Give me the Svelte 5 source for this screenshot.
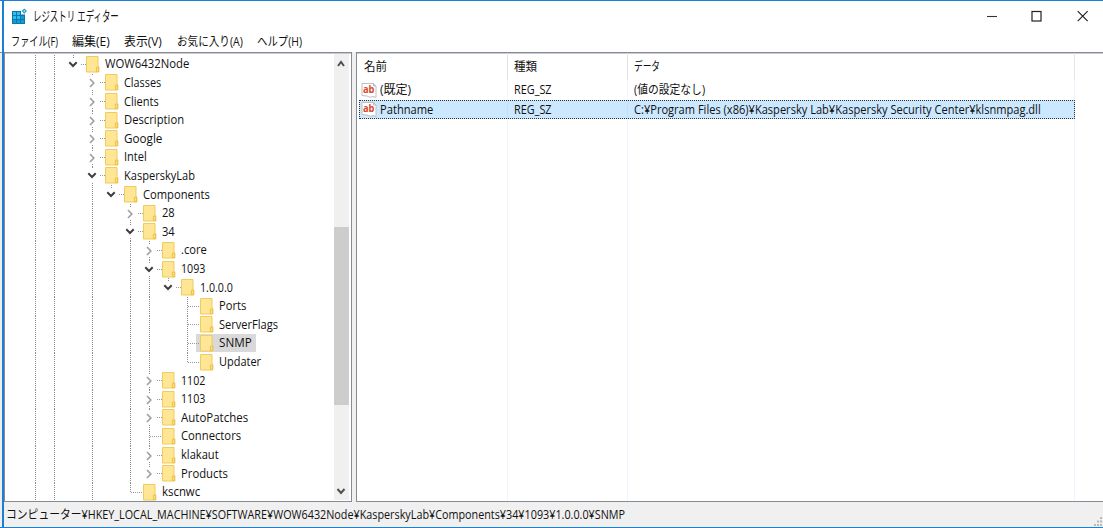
<script>
  const menu = [
    { t: 'ファイル(F)', w: 47, gap: 14 },
    { t: '編集(E)', w: 37.5, gap: 14.5 },
    { t: '表示(V)', w: 38, gap: 14.5 },
    { t: 'お気に入り(A)', w: 66, gap: 14.5 },
    { t: 'ヘルプ(H)', w: 45, gap: 0 }
  ];

  // [label, depth, state, text width, open guide depths, last sibling]
  const rows = [
    ['WOW6432Node', 0, 'open', 84, [], true],
    ['Classes', 1, 'closed', 37, [], false],
    ['Clients', 1, 'closed', 35, [], false],
    ['Description', 1, 'closed', 60, [], false],
    ['Google', 1, 'closed', 38, [], false],
    ['Intel', 1, 'closed', 23, [], false],
    ['KasperskyLab', 1, 'open', 71, [], false],
    ['Components', 2, 'open', 67, [1], true],
    ['28', 3, 'closed', 13, [1], false],
    ['34', 3, 'open', 13, [1], false],
    ['.core', 4, 'closed', 26, [1, 3], false],
    ['1093', 4, 'open', 24, [1, 3], false],
    ['1.0.0.0', 5, 'open', 33, [1, 3, 4], true],
    ['Ports', 6, 'leaf', 27, [1, 3, 4], false],
    ['ServerFlags', 6, 'leaf', 59, [1, 3, 4], false],
    ['SNMP', 6, 'leaf', 33, [1, 3, 4], false],
    ['Updater', 6, 'leaf', 42, [1, 3, 4], true],
    ['1102', 4, 'closed', 24, [1, 3], false],
    ['1103', 4, 'closed', 24, [1, 3], false],
    ['AutoPatches', 4, 'closed', 67, [1, 3], false],
    ['Connectors', 4, 'leaf', 60, [1, 3], false],
    ['klakaut', 4, 'closed', 38, [1, 3], false],
    ['Products', 4, 'closed', 47, [1, 3], true],
    ['kscnwc', 3, 'leaf', 38, [1], true]
  ].map(([label, depth, state, w, guides, last]) => ({ label, depth, state, w, guides, last }));

  const values = [
    { name: '(既定)', nw: 31, type: 'REG_SZ', data: '(値の設定なし)', dw: 71, sel: false },
    { name: 'Pathname', nw: 53, type: 'REG_SZ', data: 'C:¥Program Files (x86)¥Kaspersky Lab¥Kaspersky Security Center¥klsnmpag.dll', dw: 407, sel: true }
  ];

  // Condenses a label horizontally so that it fills the given width.
  function fit(node, width) {
    const inner = node.firstElementChild;
    inner.style.transform = `scaleX(${width / inner.offsetWidth})`;
  }
</script>

{#snippet text(t, w)}
  <span class="fit" style:width="{w}px" use:fit={w}><span>{t}</span></span>
{/snippet}

<div class="window">
  <header class="title">
    <svg class="app-icon" width="17" height="17" viewBox="0 0 17 17">
      <path d="M1 3h9v3.500h4V16H1z" fill="#0879ae" />
      <path d="M2 4h3v3H2zM6 4h3v3H6zM2 8h3v3H2zM6 8h3v3H6z" fill="#31bde9" />
      <path d="M10 8h3v3h-3zM2 12h3v3H2zM6 12h3v3H6zM10 12h3v3h-3z" fill="#159ccf" />
      <path d="M13.300.500l2.700 2.500-2.700 2.700-2.600-2.700z" fill="#1c9dd0" />
      <path d="M13.300 1.900l1.200 1.200-1.200 1.200-1.200-1.200z" fill="#a5e5fa" />
    </svg>
    {@render text('レジストリ エディター', 86)}
    <svg class="controls" width="104" height="14" viewBox="0 0 104 14">
      <path d="M1 7.500h10" stroke="#333" stroke-width="1.1" />
      <rect x="46" y="2.500" width="9" height="9.500" fill="none" stroke="#222" stroke-width="1.2" />
      <path d="M91.700 2.200l10 10M101.700 2.200l-10 10" stroke="#222" stroke-width="1.2" />
    </svg>
  </header>

  <nav>
    {#each menu as m}
      <span style:margin-right="{m.gap}px">{@render text(m.t, m.w)}</span>
    {/each}
  </nav>

  <main>
    <section class="pane tree">
      <div class="rows">
        {#each rows as r}
          <div class="row">
            <i class="cell line"></i>
            <i class="cell line"></i>
            {#each Array(r.depth) as _, d}
              <i class="cell" class:line={r.guides.includes(d)}></i>
            {/each}
            <i class="cell own line" class:half={r.last} class:leaf={r.state === 'leaf'}>
              {#if r.state === 'open'}
                <svg width="13" height="13" viewBox="0 0 13 13"><path d="M2.300 4.300l3.700 3.700 3.700-3.700" fill="none" stroke="#3f3f3f" stroke-width="2" /></svg>
              {:else if r.state === 'closed'}
                <svg width="13" height="13" viewBox="0 0 13 13"><path d="M4 3l3.800 4-3.800 4" fill="none" stroke="#a2a2a2" stroke-width="1.7" /></svg>
              {/if}
            </i>
            <i class="dash"></i>
            <div class="item" class:sel={r.label === 'SNMP'}>
              <svg class="folder" width="14" height="17" viewBox="0 0 14 17">
                <path d="M.5.500h11.500v10.300h.8v5.200H.5z" fill="#ffe694" stroke="#efcc5e" />
                <path d="M10.400 15.700v-4.500h2.200v4.500z" fill="#ffe07a" stroke="#e8bd45" stroke-width=".9" />
              </svg>
              {@render text(r.label, r.w)}
            </div>
          </div>
        {/each}
      </div>
      <div class="scroll">
        <svg width="15" height="18" viewBox="0 0 15 18"><path d="M4 12l3-4 3 4" fill="none" stroke="#505050" stroke-width="2" /></svg>
        <div class="thumb"></div>
        <svg width="15" height="18" viewBox="0 0 15 18"><path d="M3.500 7l3.500 4 3.500-4" fill="none" stroke="#505050" stroke-width="2" /></svg>
      </div>
    </section>

    <section class="pane list">
      <div class="head columns">
        <div>{@render text('名前', 23)}</div>
        <div>{@render text('種類', 23)}</div>
        <div>{@render text('データ', 26)}</div>
      </div>
      {#each values as v}
        <div class="value columns" class:selected={v.sel}>
          <div class="name">
            <svg width="16" height="17" viewBox="0 0 16 17">
              <path d="M1 1.500h11.500l2.500 2.500v11.500l-3-1-3 .8-3-1.300-5-.5z" fill="#fff" stroke="#c0c0c0" />
              <path d="M12.500 1.500V4H15" fill="none" stroke="#b8b8b8" />
              <text x="2" y="11" textLength="11.500" lengthAdjust="spacingAndGlyphs">ab</text>
            </svg>
            {@render text(v.name, v.nw)}
          </div>
          <div>{@render text(v.type, 38)}</div>
          <div>{@render text(v.data, v.dw)}</div>
        </div>
      {/each}
      <div class="fill columns"><div></div><div></div><div></div></div>
    </section>
  </main>

  <footer>
    {@render text('コンピューター¥HKEY_LOCAL_MACHINE¥SOFTWARE¥WOW6432Node¥KasperskyLab¥Components¥34¥1093¥1.0.0.0¥SNMP', 619)}
    <svg width="9" height="10" viewBox="0 0 9 10"><path d="M6 0h2v2H6zM3 3.500h2v2H3zM6 3.500h2v2H6zM0 7h2v2H0zM3 7h2v2H3zM6 7h2v2H6z" fill="#b9b9b9" /></svg>
  </footer>
</div>

<style>
  :global(body) { background: #fff; overflow: hidden; }
  .window {
    box-sizing: border-box;
    width: 1103px;
    height: 528px;
    display: flex;
    flex-direction: column;
    padding-left: 4px;
    border-top: 1px solid #1a80d6;
    border-bottom: 1px solid #1a80d6;
    background: linear-gradient(90deg, transparent 2px, #1a80d6 2px 4px, transparent 4px),
      linear-gradient(#fff 51px, #888b95 51px 52px, #eee 52px);
    font: 12px/16px 'Open Sans', 'Noto Sans CJK JP', sans-serif;
    color: #111;
  }
  .fit { display: inline-block; flex: none; white-space: nowrap; }
  .fit > span { display: inline-block; transform-origin: 0 50%; }
  .title { height: 30px; display: flex; align-items: center; padding-left: 7px; box-sizing: border-box; background: #fff; flex: none; font-size: 13.500px; }
  .app-icon { margin-right: 5px; }
  .controls { margin-left: auto; margin-right: 13.500px; }
  nav { height: 21px; display: flex; align-items: center; padding-left: 7px; background: #fff; flex: none; font-size: 12.500px; }
  main { height: 450px; display: flex; gap: 4px; flex: none; background: #f0f0f0; }
  .pane { box-sizing: border-box; border: 1px solid #878b96; background: #fff; overflow: hidden; }
  .tree { width: 348px; display: flex; justify-content: space-between; padding-right: 2px; box-shadow: inset 0 1px #c8cad0; }
  .rows { padding: 2px 0 0 21.400px; }
  .row { height: 18.610px; display: flex; align-items: center; }
  .cell { width: 18.930px; height: 100%; flex: none; display: flex; align-items: center; justify-content: center; background-position: 9px 0; background-size: 1px 100%; background-repeat: no-repeat; }
  .line { background-image: repeating-linear-gradient(#8c8c8c 0 1px, #fff 1px 2px); }
  .half { background-size: 1px 50%; }
  .own svg { background: #fff; }
  .dash { width: 5px; height: 1px; margin-left: -2px; flex: none; background: repeating-linear-gradient(90deg, #999 0 1px, transparent 1px 2px); }
  .leaf + .dash { width: 12px; margin-left: -9px; z-index: 1; }
  .item { height: 18px; display: flex; align-items: center; gap: 5px; padding-right: 4px; }
  .sel { background: #d9d9d9; margin-left: -4px; padding-left: 4px; }
  .folder { flex: none; }
  .scroll { width: 15px; height: 446px; margin-top: 1px; background: #f0f0f0; display: flex; flex-direction: column; flex: none; }
  .thumb { height: 178px; margin: 155px 0 auto; background: #cdcdcd; }
  .list { flex: 1; border-right: 0; display: flex; flex-direction: column; padding-left: 2px; box-shadow: inset 0 1px #c8cad0; }
  .columns { display: grid; grid-template-columns: 149px 120px 447px; width: 716px; box-sizing: border-box; flex: none; }
  .columns > div { display: flex; align-items: center; padding-left: 6px; box-sizing: border-box; border-right: 1px solid #edf6fc; }
  .head { height: 27px; }
  .head > div { border-color: #e4e4e4; }
  .head > div:first-child { padding-left: 5px; }
  .value { height: 20px; }
  .value > .name { padding-left: 2px; gap: 3px; }
  .value svg { overflow: visible; flex: none; }
  .value text { font: bold 11px 'Open Sans', sans-serif; fill: #d9482b; }
  .selected { height: 19px; background: #cce8ff; outline: 1px dotted #333; outline-offset: -1px; }
  .selected > div { border-color: #c2e0f8; }
  .columns.fill { flex: 1; }
  footer { flex: 1; display: flex; align-items: center; justify-content: space-between; padding-left: 2px; background: #f0f0f0; }
  footer svg { align-self: flex-end; }
</style>
